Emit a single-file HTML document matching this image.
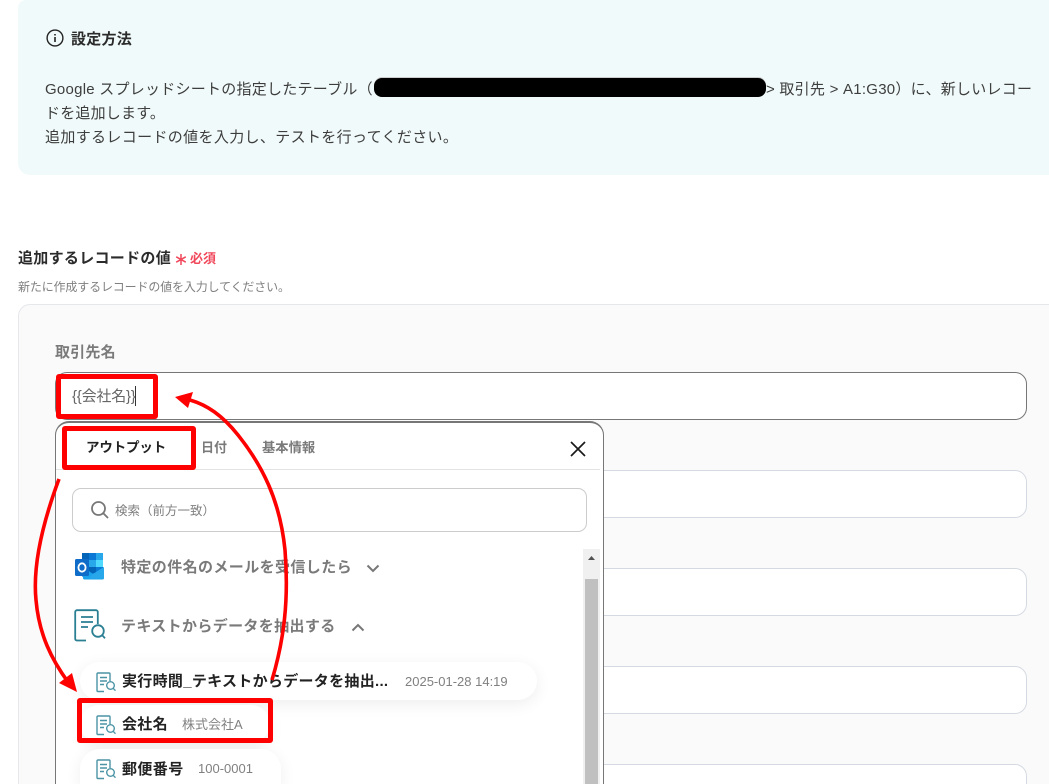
<!DOCTYPE html>
<html lang="ja">
<head>
<meta charset="utf-8">
<title>設定方法</title>
<style>
html,body{margin:0;padding:0;background:#fff;width:1049px;height:784px;overflow:hidden}
body{font-family:"Liberation Sans","Noto Sans CJK JP",sans-serif;color:#333}
#w{position:relative;width:1049px;height:784px;overflow:hidden}
.a{position:absolute;box-sizing:border-box}
.t{position:absolute;white-space:nowrap;line-height:20px;height:20px}
.b{font-weight:700}
.inp{position:absolute;left:55px;width:972px;height:48px;background:#fff;border:1px solid #d5dae2;border-radius:12px;box-sizing:border-box}
.pill{position:absolute;left:80px;background:#fff;border-radius:20px;box-shadow:0 4px 16px rgba(0,0,0,.07)}
.red{position:absolute;box-sizing:border-box;border:5px solid #f00;border-radius:3px}
</style>
</head>
<body>
<div id="w">
<div class="a" style="left:18px;top:0;width:1031px;height:175px;background:#f1fafa;border-radius:8px 0 0 12px"></div>
<svg class="a" style="left:46px;top:29px" width="18" height="18" viewBox="0 0 18 18" fill="none" stroke="#222" stroke-width="1.4"><circle cx="9" cy="9" r="7.9"/><path d="M9 8v5M9 5v1.5" stroke-width="1.6"/></svg>
<span class="t b" style="left:71px;top:30px;font-size:15px;letter-spacing:.25px;color:#2b2b2b">設定方法</span>
<span class="t" style="left:45px;top:80px;font-size:15px;letter-spacing:.25px;color:#3d3d3d">Google スプレッドシートの指定したテーブル（</span>
<div class="a" style="left:374px;top:78px;width:392px;height:19px;background:#000;border-radius:8px;box-shadow:0 -1px 0 #ccc"></div>
<span class="t" style="left:766px;top:80px;font-size:15px;letter-spacing:.25px;color:#3d3d3d">&gt; 取引先 &gt; A1:G30）に、新しいレコー</span>
<span class="t" style="left:45px;top:104px;font-size:15px;letter-spacing:.2px;color:#3d3d3d">ドを追加します。</span>
<span class="t" style="left:45px;top:128px;font-size:15px;letter-spacing:.35px;color:#3d3d3d">追加するレコードの値を入力し、テストを行ってください。</span>

<span class="t b" style="left:18px;top:249px;font-size:15px;letter-spacing:.3px;color:#2b2b2b">追加するレコードの値</span>
<svg class="a" style="left:175px;top:253px" width="12" height="13" viewBox="0 0 12 13" fill="none" stroke="#f0475a" stroke-width="1.5"><path d="M6 1v11M1.2 3.8l9.6 5.4M10.8 3.8L1.2 9.2"/></svg>
<span class="t b" style="left:190px;top:249px;font-size:13px;color:#f0475a">必須</span>
<span class="t" style="left:18px;top:277px;font-size:12px;letter-spacing:-.15px;color:#808080">新たに作成するレコードの値を入力してください。</span>

<div class="a" style="left:18px;top:304px;width:1031px;height:480px;background:#fafafa;border:1px solid #e5e7eb;border-right:0;border-bottom:0;border-radius:12px 0 0 0"></div>
<span class="t b" style="left:55px;top:343px;font-size:15px;letter-spacing:.2px;color:#7a7a7a">取引先名</span>
<div class="inp" style="top:372px;border-color:#777"></div>
<span class="t" style="left:72px;top:387px;font-size:15px;letter-spacing:-.2px;color:#666">{{会社名}}</span>
<div class="a" style="left:135px;top:386px;width:1px;height:20px;background:#333"></div>
<div class="inp" style="top:470px"></div>
<div class="inp" style="top:568px"></div>
<div class="inp" style="top:666px"></div>
<div class="inp" style="top:764px;height:20px;border-bottom:0;border-radius:12px 12px 0 0"></div>

<div class="a" style="left:55px;top:421px;width:549px;height:363px;background:#fff;border:1px solid #777;border-top-width:2px;border-bottom:0;border-radius:14px 14px 0 0"></div>
<span class="t b" style="left:86px;top:438px;font-size:13.5px;letter-spacing:-.15px;color:#222">アウトプット</span>
<span class="t b" style="left:201px;top:438px;font-size:13px;color:#7a7a7a">日付</span>
<span class="t b" style="left:262px;top:438px;font-size:13.3px;color:#7a7a7a">基本情報</span>
<svg class="a" style="left:569px;top:440px" width="18" height="18" viewBox="0 0 18 18" fill="none" stroke="#1a1a1a" stroke-width="1.7"><path d="M2 2l14 14M16 2L2 16"/></svg>
<div class="a" style="left:56px;top:469px;width:544px;height:1px;background:#e3e3e3"></div>
<div class="a" style="left:72px;top:488px;width:515px;height:44px;border:1px solid #ccc;border-radius:9px;background:#fff"></div>
<svg class="a" style="left:90px;top:500px" width="20" height="20" viewBox="0 0 20 20" fill="none" stroke="#777" stroke-width="1.8"><circle cx="8.5" cy="8.5" r="6.5"/><path d="M13.3 13.3l4.7 4.7"/></svg>
<span class="t" style="left:115px;top:501px;font-size:12.5px;color:#808080">検索（前方一致）</span>

<div class="a" style="left:583px;top:549px;width:17px;height:235px;background:#f0f0f0"></div>
<div class="a" style="left:585px;top:579px;width:13px;height:205px;background:#c0c0c0"></div>
<svg class="a" style="left:587px;top:555px" width="9" height="6" viewBox="0 0 9 6"><path d="M4.5 1L8 5H1z" fill="#505050"/></svg>

<svg class="a" style="left:75px;top:552px" width="30" height="29" viewBox="0 0 30 29">
<rect x="7" y="1" width="21" height="24" rx="1.5" fill="#0a78d4"/>
<rect x="7" y="1" width="7" height="7" fill="#0364b8"/>
<rect x="14" y="1" width="7" height="7" fill="#0a78d4"/>
<rect x="21" y="1" width="7" height="7" fill="#28a8ea"/>
<rect x="14" y="8" width="7" height="7" fill="#28a8ea"/>
<rect x="21" y="8" width="7" height="7" fill="#50d9ff"/>
<rect x="14" y="15" width="7" height="6" fill="#0364b8"/>
<path d="M8 15l10 7 11-7v11a1.5 1.5 0 0 1-1.5 1.5H9.5A1.5 1.5 0 0 1 8 26z" fill="#1aa3ec"/>
<path d="M18 22l11-7v11.5H14z" fill="#28a8ea"/>
<rect x="0" y="7" width="14" height="17" rx="1.5" fill="#0f6cc8"/>
<ellipse cx="7" cy="15.5" rx="3.6" ry="4.2" fill="none" stroke="#fff" stroke-width="1.8"/>
</svg>
<span class="t b" style="left:121px;top:558px;font-size:15px;letter-spacing:.4px;color:#7a7a7a">特定の件名のメールを受信したら</span>
<svg class="a" style="left:366px;top:564px" width="14" height="9" viewBox="0 0 14 9" fill="none" stroke="#777" stroke-width="2"><path d="M1.5 1.5L7 7l5.5-5.5"/></svg>

<svg class="a" style="left:74px;top:609px" width="32" height="34" viewBox="0 0 32 34" fill="none" stroke="#2a7f93" stroke-width="1.8">
<path d="M12 31.5H3a1.8 1.8 0 0 1-1.8-1.8V3A1.8 1.8 0 0 1 3 1.2h19A1.8 1.8 0 0 1 23.800 3v12"/>
<path d="M7 8h12M7 13h12M7 18h7"/>
<circle cx="24" cy="22" r="5.800" fill="#fff"/>
<path d="M28.300 26.300l2.700 3"/>
</svg>
<span class="t b" style="left:121px;top:617px;font-size:15px;letter-spacing:.36px;color:#7a7a7a">テキストからデータを抽出する</span>
<svg class="a" style="left:351px;top:623px" width="14" height="9" viewBox="0 0 14 9" fill="none" stroke="#777" stroke-width="2"><path d="M1.500 7.500L7 2l5.500 5.500"/></svg>

<div class="pill" style="top:662px;width:457px;height:38px"></div>
<div class="pill" style="top:705px;width:190px;height:38px"></div>
<div class="pill" style="top:749px;width:201px;height:35px;border-radius:20px 20px 0 0"></div>

<svg class="a" style="left:96px;top:672px" width="21" height="21" viewBox="0 0 21 21" fill="none" stroke="#4b94a5" stroke-width="1.400"><path d="M8 19.500H2a1 1 0 0 1-1-1V2a1 1 0 0 1 1-1h11a1 1 0 0 1 1 1v7"/><path d="M4 5.500h7M4 9h7M4 12.500h4"/><circle cx="14.500" cy="13.500" r="3.800" fill="#fff"/><path d="M17.200 16.300l2.300 2.400"/></svg>
<svg class="a" style="left:96px;top:715px" width="21" height="21" viewBox="0 0 21 21" fill="none" stroke="#4b94a5" stroke-width="1.400"><path d="M8 19.500H2a1 1 0 0 1-1-1V2a1 1 0 0 1 1-1h11a1 1 0 0 1 1 1v7"/><path d="M4 5.500h7M4 9h7M4 12.500h4"/><circle cx="14.500" cy="13.500" r="3.800" fill="#fff"/><path d="M17.200 16.300l2.300 2.400"/></svg>
<svg class="a" style="left:96px;top:759px" width="21" height="21" viewBox="0 0 21 21" fill="none" stroke="#4b94a5" stroke-width="1.400"><path d="M8 19.500H2a1 1 0 0 1-1-1V2a1 1 0 0 1 1-1h11a1 1 0 0 1 1 1v7"/><path d="M4 5.500h7M4 9h7M4 12.500h4"/><circle cx="14.500" cy="13.500" r="3.800" fill="#fff"/><path d="M17.200 16.300l2.300 2.400"/></svg>

<span class="t b" style="left:122px;top:672px;font-size:15px;letter-spacing:.3px;color:#222">実行時間_テキストからデータを抽出...</span>
<span class="t" style="left:405px;top:672px;font-size:13px;color:#808080">2025-01-28 14:19</span>
<span class="t b" style="left:122px;top:715px;font-size:15px;letter-spacing:.3px;color:#222">会社名</span>
<span class="t" style="left:182px;top:715px;font-size:13px;color:#808080">株式会社A</span>
<span class="t b" style="left:122px;top:760px;font-size:15px;letter-spacing:.4px;color:#222">郵便番号</span>
<span class="t" style="left:198px;top:759px;font-size:13px;color:#808080">100-0001</span>

<div class="red" style="left:56px;top:374px;width:102px;height:45px"></div>
<div class="red" style="left:62px;top:426px;width:134px;height:44px"></div>
<div class="red" style="left:77px;top:698px;width:196px;height:45px"></div>

<svg class="a" style="left:0;top:0" width="1049" height="784" viewBox="0 0 1049 784" fill="none">
<path d="M59 479C40 530 33 570 36 600C39 635 52 660 68 682" stroke="#f00" stroke-width="3.600"/>
<path d="M77 692L59 683L72 673Z" fill="#f00"/>
<path d="M272 680C284 640 289 600 285 550C280 500 262 465 238 435C222 415 207 405 190 400" stroke="#f00" stroke-width="3.600"/>
<path d="M175 397L193 392L188 408Z" fill="#f00"/>
</svg>
</div>
</body>
</html>
